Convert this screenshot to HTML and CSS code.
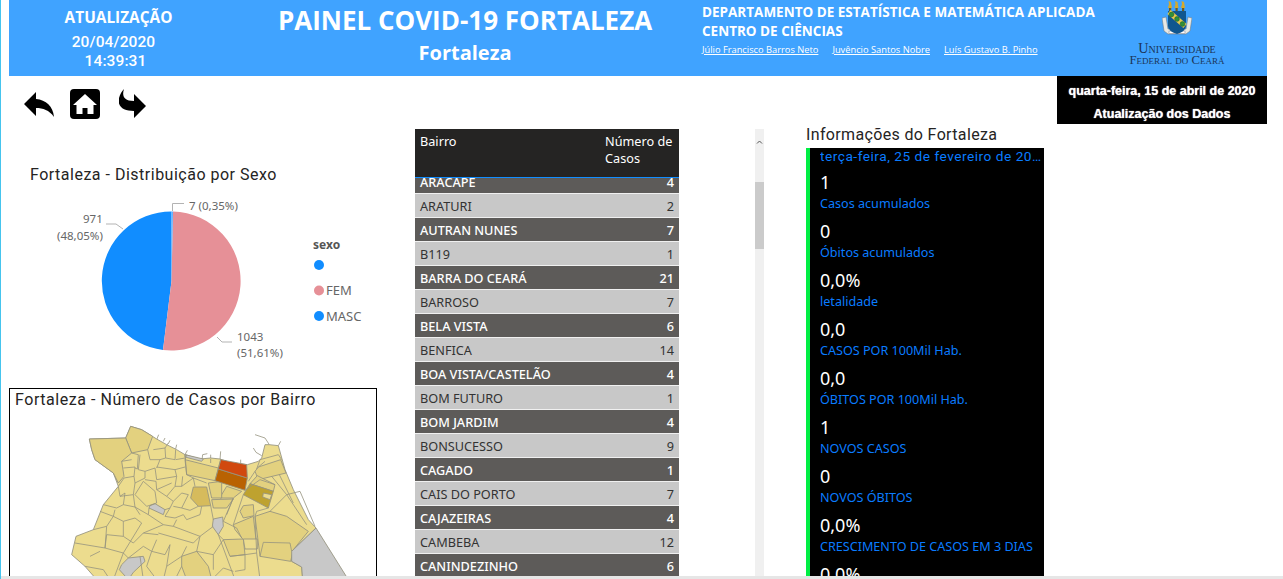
FILE: index.html
```html
<!DOCTYPE html>
<html lang="pt-BR">
<head>
<meta charset="utf-8">
<title>Painel COVID-19 Fortaleza</title>
<link rel="stylesheet" href="styles.css">
</head>
<body>
<div class="page">
  <header class="header">
    <div class="update">
      <div class="update-title">ATUALIZAÇÃO</div>
      <div class="update-date">20/04/2020</div>
      <div class="update-time">14:39:31</div>
    </div>
    <div class="title">
      <h1>PAINEL COVID-19 FORTALEZA</h1>
      <h2>Fortaleza</h2>
    </div>
    <div class="dept">
      <div class="dept-line">DEPARTAMENTO DE ESTATÍSTICA E MATEMÁTICA APLICADA</div>
      <div class="dept-line">CENTRO DE CIÊNCIAS</div>
      <div class="authors">
        <a href="#">Júlio Francisco Barros Neto</a>
        <a href="#">Juvêncio Santos Nobre</a>
        <a href="#">Luís Gustavo B. Pinho</a>
      </div>
    </div>
    <div class="logo">
      <svg class="crest" viewBox="0 0 30 34" width="30" height="34" aria-hidden="true">
        <path d="M0 17 L4 16 L6 28 L24 28 L26 16 L30 17 L28 30 L24 33 L6 33 L2 30 Z" fill="#e8e8e4" stroke="#6f7f8c" stroke-width=".6"/>
        <rect x="7" y="30" width="16" height="2.4" fill="#fff" stroke="#667" stroke-width=".4"/>
        <path d="M6 10 H24 V25 Q24 30 15 33 Q6 30 6 25 Z" fill="#10568f"/>
        <g fill="#d5a92c">
          <path d="M6.5 0 L9 1 L10 7 H6 L7 3 Z"/>
          <path d="M13 0 L15.500 1 L16.500 7 H12.500 L13.500 3 Z"/>
          <path d="M19.500 0 L22 1 L23 7 H19 L20 3 Z"/>
        </g>
        <g fill="#6c5a22">
          <rect x="7" y="7" width="2.200" height="3"/>
          <rect x="13.500" y="7" width="2.200" height="3"/>
          <rect x="20" y="7" width="2.200" height="3"/>
        </g>
        <path d="M7 11 L23 25" stroke="#e4c74c" stroke-width="5"/>
        <g fill="#2f8f3a" stroke="#1d5a26" stroke-width=".5">
          <circle cx="9.500" cy="13.500" r="2.400"/>
          <circle cx="15" cy="18" r="2.400"/>
          <circle cx="20.500" cy="23" r="2.400"/>
        </g>
      </svg>
      <div class="logo-text">Universidade<br>Federal do Ceará</div>
    </div>
  </header>

  <main class="main">
    <section class="left">
      <nav class="nav">
        <svg class="nav-back" viewBox="24 89 31 30" width="31" height="30" aria-hidden="true">
          <path d="M24 104 L36 92 V99 C46 100 53 106 54 117 C49 110 43 108 36 108 V116 Z" fill="#000"/>
        </svg>
        <svg class="nav-home" viewBox="0 0 30 30" width="30" height="30" aria-hidden="true">
          <rect width="30" height="30" rx="4" fill="#000"/>
          <path d="M15 5 L27 16 H23.500 V25 H17.500 V19 H12.500 V25 H6.500 V16 H3 Z" fill="#fff"/>
        </svg>
        <svg class="nav-forward" viewBox="119 89 28 30" width="28" height="30" aria-hidden="true">
          <path d="M134 94 L146 106 L134 118 V111 C124 111 117 107 119 98 C120 94 122 91 124 89 C122 95 123 101 134 101 Z" fill="#000"/>
        </svg>
      </nav>
      <h3 class="pie-title">Fortaleza - Distribuição por Sexo</h3>
      <svg class="pie" viewBox="0 186 368 200" width="368" height="200">
        <g transform="translate(-9 0)">
          <path d="M171.500 281 L163 350 A69.500 69.500 0 0 1 171.500 211.500 Z" fill="#118dff"/>
          <path d="M171.500 281 L173 211.500 A69.500 69.500 0 1 1 163 350 Z" fill="#e69097"/>
          <path d="M171.500 281 L171.500 211.500 L173 211.500 Z" fill="#5aaeff"/>
          <g fill="none" stroke="#b3b3b3" stroke-width="1">
            <path d="M172.500 211 V203.500 H184"/>
            <path d="M123 229 L116 224 H106"/>
            <path d="M217 337 L222 342 H232"/>
          </g>
          <g class="pie-label">
            <text x="189" y="210">7 (0,35%)</text>
            <text x="83" y="223">971</text>
            <text x="57" y="240">(48,05%)</text>
            <text x="237" y="341">1043</text>
            <text x="237" y="357">(51,61%)</text>
          </g>
          <text class="legend-title" x="313" y="249">sexo</text>
          <circle cx="319" cy="265" r="5" fill="#118dff"/>
          <circle cx="319" cy="290.500" r="5" fill="#e69097"/>
          <circle cx="319" cy="316" r="5" fill="#118dff"/>
          <text class="legend-item" x="326" y="295">FEM</text>
          <text class="legend-item" x="326" y="321">MASC</text>
        </g>
      </svg>
      <div class="map-box">
        <h3 class="map-title">Fortaleza - Número de Casos por Bairro</h3>
        <svg class="map" viewBox="30 91 1098 507" width="366" height="169" aria-hidden="true">
          <path class="coast" d="M470 180 L476 165 M490 185 L495 175 M505 192 L510 182 M527 208 L530 195 M555 225 L562 212 M606 240 L608 225 L622 222 M632 238 L632 225 M660 240 L662 215 M722 252 L722 240 M765 165 L795 175 L808 195 M835 198 L842 185 M760 205 L768 218 L785 228"/>
          <path class="cell base" d="M268 178 L377 175 L392 140 L425 150 L470 178 L500 195 L530 210 L555 225 L600 238 L632 235 L660 238 L690 248 L720 252 L742 255 L775 245 L785 235 L795 195 L808 195 L835 198 L855 270 L880 330 L925 420 L948 445 L875 515 L875 545 L905 562 L908 600 L290 600 L255 560 L215 525 L228 470 L280 450 L310 375 L355 320 L340 280 L285 240 L275 210 Z"/>
          <path class="cell mid" d="M377 175 L392 140 L425 150 L458 170 L443 210 L395 220 Z"/>
          <path class="cell mid" d="M268 178 L377 175 L395 220 L365 245 L372 290 L355 310 L340 280 L285 240 L275 210 Z"/>
          <path class="cell mid" d="M555 240 L655 265 L645 303 L560 285 Z"/>
          <path class="cell mid" d="M775 262 L842 240 L858 280 L775 300 L765 275 Z"/>
          <path class="cell mid" d="M750 312 L772 288 L825 315 L820 335 Z"/>
          <path class="cell mid" d="M810 395 L860 410 L925 455 L880 510 L872 545 L780 530 L765 410 Z"/>
          <path class="cell mid" d="M545 530 L590 515 L625 560 L635 600 L560 600 L545 560 Z"/>
          <path class="cell mid" d="M730 378 L760 375 L762 408 L730 415 L720 395 Z"/>
          <path class="cell mid" d="M665 345 L680 320 L725 335 L700 355 L660 355 Z"/>
          <path class="cell mid" d="M625 310 L665 305 L665 355 L635 355 Z"/>
          <path class="cell mid" d="M635 360 L700 358 L680 385 L640 385 Z"/>
          <path class="cell mid" d="M670 480 L730 478 L735 525 L690 530 Z"/>
          <path class="cell mid" d="M700 435 L760 410 L768 480 L730 480 L705 450 Z"/>
          <path class="cell hi" d="M580 322 L620 322 L632 378 L595 380 L572 355 Z"/>
          <path class="cell hot2" d="M655 268 L742 295 L735 332 L645 303 Z"/>
          <path class="cell hot1" d="M662 240 L740 255 L742 295 L655 268 Z"/>
          <path class="cell olive" d="M750 312 L820 335 L805 385 L730 345 Z"/>
          <path class="cell light" d="M790 340 L815 345 L810 360 L788 352 Z"/>
          <path class="cell light" d="M730 478 L772 478 L772 508 L735 508 Z"/>
          <path class="cell gray" d="M948 445 L1045 600 L908 600 L905 562 L875 545 L875 515 Z"/>
          <path class="cell gray" d="M450 378 L465 372 L495 390 L490 405 L447 385 Z"/>
          <path class="cell gray" d="M640 418 L668 412 L670 440 L655 465 L637 440 Z"/>
          <path class="cell gray" d="M365 555 L385 535 L430 530 L435 545 L400 578 L385 600 L358 570 Z"/>
          <path class="cell gray" d="M555 225 L610 238 L605 245 L555 232 Z"/>
          <path class="lines" d="M395 220 L415 225 L412 268 L405 265 M365 245 L395 240 M370 265 L405 262 L402 290 L372 295
            M420 225 L415 270 L435 275 L465 265 L470 300 M443 210 L450 240 L480 240 L470 265 M460 210 L495 205 L497 235 L480 240 M495 205 L505 190 M497 235 L525 240 L527 210
            M527 240 L555 235 M555 225 L560 285 M470 262 L525 270 L530 290 L470 300 M525 270 L555 262
            M372 295 L355 320 L360 350 L400 345 L405 310 L435 295 L435 275 M405 310 L402 290 M435 300 L468 305 L470 330 L500 350 L525 320 L545 320 L548 290 M470 330 L515 310 M530 290 L525 320
            M545 320 L580 295 L585 320 M560 285 L580 295 L620 310
            M405 345 L430 305 L465 335 L470 370 L440 380 L405 345 M360 350 L375 340 L370 375 L405 382 M400 345 L405 382 L445 405 L447 385 M405 382 L420 405
            M500 350 L520 365 L510 385 L495 390 M520 365 L545 340 L565 345 L545 385 L520 380 M545 385 L570 392 L595 380
            M510 385 L495 410 L525 415 L550 405 L560 420 L600 405 L605 380
            M310 375 L350 385 L370 375 M300 395 L340 410 L345 390 M320 440 L340 410 L370 425 L370 470 L320 465 M370 425 L405 415 L425 430 M280 450 L320 440 L315 505 L225 490
            M315 505 L370 520 L385 535 M320 465 L315 505 M425 430 L370 520 M370 470 L400 490 L430 460 L475 465 M430 460 L490 435 L520 440 L530 420 M445 405 L490 435
            M475 460 L580 490 L600 470 L640 440 M520 440 L600 470 M470 480 L455 515 L495 525 L510 495 M455 515 L440 560 L470 600 M510 495 L500 560 L545 530 M500 560 L490 600 M430 500 L455 515 M430 500 L385 535
            M590 515 L600 470 M590 515 L640 525 L670 480 L655 465 L705 600 M640 525 L640 570 M670 425 L710 445 L725 475 M680 405 L700 355 L670 425 M632 378 L640 420 M730 345 L700 435
            M765 410 L770 520 L780 600 M690 530 L735 525 L735 570 L705 575 M735 525 L770 520 M780 530 L790 488 L870 490 L875 515 M805 385 L770 395 L765 410
            M810 395 L860 345 L920 435 M860 345 L900 335 L945 440 M838 285 L880 370 M815 290 L860 345 M780 300 L825 315 M735 332 L780 300 M655 265 L662 240 M555 240 L560 225 M632 238 L632 250
            M770 268 L780 240 L835 225 L845 240 M765 275 L745 305 M795 245 L775 262 M635 600 L670 565 L700 575 M560 500 L545 530 M545 560 L525 600
            M270 530 L300 515 M340 600 L370 520 M255 560 L310 570 M310 570 L330 600 M420 530 L430 600"/>
        </svg>
      </div>
    </section>

    <section class="cases">
      <div class="cases-head">
        <div>Bairro</div>
        <div class="cases-head-num">Número de Casos</div>
      </div>
      <div class="cases-body">
        <div class="row dark"><span>ARACAPE</span><span>4</span></div>
        <div class="row"><span>ARATURI</span><span>2</span></div>
        <div class="row dark"><span>AUTRAN NUNES</span><span>7</span></div>
        <div class="row"><span>B119</span><span>1</span></div>
        <div class="row dark"><span>BARRA DO CEARÁ</span><span>21</span></div>
        <div class="row"><span>BARROSO</span><span>7</span></div>
        <div class="row dark"><span>BELA VISTA</span><span>6</span></div>
        <div class="row"><span>BENFICA</span><span>14</span></div>
        <div class="row dark"><span>BOA VISTA/CASTELÃO</span><span>4</span></div>
        <div class="row"><span>BOM FUTURO</span><span>1</span></div>
        <div class="row dark"><span>BOM JARDIM</span><span>4</span></div>
        <div class="row"><span>BONSUCESSO</span><span>9</span></div>
        <div class="row dark"><span>CAGADO</span><span>1</span></div>
        <div class="row"><span>CAIS DO PORTO</span><span>7</span></div>
        <div class="row dark"><span>CAJAZEIRAS</span><span>4</span></div>
        <div class="row"><span>CAMBEBA</span><span>12</span></div>
        <div class="row dark"><span>CANINDEZINHO</span><span>6</span></div>
      </div>
    </section>

    <div class="scrollbar">
      <svg class="scroll-arrow" viewBox="0 0 9 6" width="9" height="6" aria-hidden="true"><path d="M2 4.500 L4.500 2 L7 4.500" fill="none" stroke="#555" stroke-width="1"/></svg>
      <div class="scroll-thumb"></div>
    </div>

    <section class="info">
      <h3 class="info-title">Informações do Fortaleza</h3>
      <div class="info-card">
        <div class="info-date">terça-feira, 25 de fevereiro de 2020</div>
        <div class="stat"><div class="stat-value">1</div><div class="stat-label">Casos acumulados</div></div>
        <div class="stat"><div class="stat-value">0</div><div class="stat-label">Óbitos acumulados</div></div>
        <div class="stat"><div class="stat-value">0,0%</div><div class="stat-label">letalidade</div></div>
        <div class="stat"><div class="stat-value">0,0</div><div class="stat-label">CASOS POR 100Mil Hab.</div></div>
        <div class="stat"><div class="stat-value">0,0</div><div class="stat-label">ÓBITOS POR 100Mil Hab.</div></div>
        <div class="stat"><div class="stat-value">1</div><div class="stat-label">NOVOS CASOS</div></div>
        <div class="stat"><div class="stat-value">0</div><div class="stat-label">NOVOS ÓBITOS</div></div>
        <div class="stat"><div class="stat-value">0,0%</div><div class="stat-label">CRESCIMENTO DE CASOS EM 3 DIAS</div></div>
        <div class="stat"><div class="stat-value">0,0%</div></div>
      </div>
    </section>

    <aside class="refresh">
      <div>quarta-feira, 15 de abril de 2020</div>
      <div>Atualização dos Dados</div>
    </aside>
  </main>
  <div class="bottom-bar"></div>
</div>
</body>
</html>
```

FILE: styles.css
```css
* { box-sizing: border-box; }
html, body { margin: 0; padding: 0; height: 100%; overflow: hidden; background: #fff; }
h1, h2, h3 { margin: 0; font-weight: normal; }

.page {
  width: 1283px;
  height: 579px;
  display: flex;
  flex-direction: column;
  border-left: 1px solid #45c4ee;
  overflow: hidden;
  font-family: "Noto Sans", sans-serif;
  color: #252423;
}

/* Header */
.header {
  flex: none;
  width: 1258px;
  height: 76px;
  margin-left: 8px;
  display: flex;
  background: #40a3ff;
  color: #fff;
}
.update { width: 219px; text-align: center; padding-top: 9px; }
.update-title { font: bold 15.4px/18px "Open Sans", sans-serif; }
.update-date { font: 500 15.5px/19px Roboto, sans-serif; padding-right: 10px; margin-top: 6px; letter-spacing: .1px; }
.update-time { font: 500 15.5px/19px Roboto, sans-serif; padding-right: 6px; letter-spacing: .1px; }
.title { width: 474px; text-align: center; padding-top: 3px; }
.title h1 { font: bold 26px/34px "Open Sans", sans-serif; }
.title h2 { font: bold 20px/26px "Open Sans", sans-serif; margin-top: 3px; }
.dept { width: 418px; padding-top: 3px; }
.dept-line { font: bold 13.5px/18.5px "Open Sans", sans-serif; }
.authors { display: flex; gap: 14px; margin-top: 2px; font: 9.3px/16px "Open Sans", sans-serif; }
.authors a { color: #fff; text-decoration: underline; }
.logo { width: 105px; display: flex; flex-direction: column; align-items: center; padding: 1px 0 0 9px; }
.crest { flex: none; margin-bottom: 7px; }
.logo-text {
  font: 12.7px/12px "Liberation Serif", serif;
  font-variant: small-caps;
  color: #1b3558;
  white-space: nowrap;
  text-align: center;
}
.logo-text::first-line { font-size: 14.2px; }

/* Main */
.main { flex: 1; min-height: 0; display: flex; align-items: flex-start; overflow: hidden; }

.left { flex: none; width: 368px; margin-left: 8px; }
.nav { display: flex; align-items: center; height: 30px; margin-top: 13px; padding-left: 15px; }
.nav-home { margin-left: 15px; }
.nav-forward { margin-left: 19px; }
.pie-title { font: 16px/20px Roboto, sans-serif; letter-spacing: .5px; margin: 46px 0 0 21px; height: 20px; color: #252423; }
.pie { display: block; margin-top: 1px; }
.pie-label text { font: 11.5px "Noto Sans", sans-serif; fill: #666; }
.legend-title { font: bold 12px "Noto Sans", sans-serif; fill: #555; }
.legend-item { font: 13px "Noto Sans", sans-serif; fill: #666; }
.map-box { border: 1px solid #000; height: 260px; margin-top: 2px; padding-top: 1px; }
.map-title { font: 16px/20px Roboto, sans-serif; letter-spacing: .55px; padding-left: 5px; }
.map { display: block; }
.cell { stroke: #96937f; stroke-width: 2.6; stroke-linejoin: round; }
.base, .light { fill: #ecdc8e; }
.mid { fill: #e3d17f; }
.hi { fill: #d6bb5c; }
.hot1 { fill: #d1490f; }
.hot2 { fill: #b96202; }
.olive { fill: #bea22f; }
.gray { fill: #c8c8c8; }
.lines, .coast { fill: none; stroke: #96937f; stroke-width: 2.4; stroke-linejoin: round; }

/* Table */
.cases { flex: none; width: 264px; height: 450px; margin: 53px 0 0 38px; display: flex; flex-direction: column; overflow: hidden; font-size: 12.7px; }
.cases-head {
  flex: none;
  height: 49px;
  display: flex;
  justify-content: space-between;
  padding: 4px 5px 0;
  background: #252423;
  border-bottom: 1px solid #118dff;
  color: #fff;
  line-height: 17px;
}
.cases-head-num { width: 69px; }
.cases-body { flex: 1; overflow: hidden; }
.row {
  height: 24px;
  display: flex;
  justify-content: space-between;
  align-items: center;
  padding: 1px 5px 0;
  background: #c8c8c8;
  border-bottom: 1px solid #f0f0f0;
  color: #333;
}
.row:first-child { margin-top: -8px; }
.row.dark { background: #5d5b59; color: #fff; font-weight: 500; }

/* Scrollbar */
.scrollbar { flex: none; width: 9px; height: 450px; margin: 53px 0 0 76px; background: #f0f0f0; padding-top: 10px; }
.scroll-arrow { display: block; }
.scroll-thumb { height: 67px; margin-top: 37px; background: #cbcbcb; }

/* Info card */
.info { flex: none; width: 238px; margin: 49px 0 0 42px; }
.info-title { font: 16px/20px Roboto, sans-serif; letter-spacing: .35px; height: 23px; }
.info-card { height: 440px; background: #000; border-left: 4px solid #00ee44; padding: 0 0 0 10px; overflow: hidden; }
.info-date { font: 400 13.7px/17px Roboto, sans-serif; letter-spacing: .5px; color: #0a7cff; white-space: nowrap; overflow: hidden; text-overflow: ellipsis; }
.stat { height: 49px; padding-top: 6px; }
.stat-value { font: 18px/22px "Noto Sans", sans-serif; color: #fff; }
.stat-label { font: 12.6px/18px "Noto Sans", sans-serif; color: #0a7cff; white-space: nowrap; margin-top: 2px; }

/* Refresh badge */
.refresh {
  flex: none;
  width: 210px;
  height: 48px;
  margin-left: 13px;
  background: #000;
  color: #fff;
  font: bold 12.5px/23px "Liberation Sans", sans-serif;
  text-align: center;
  padding-top: 4px;
  text-shadow: 0 0 1px #fff;
}

.bottom-bar { flex: none; height: 3px; background: #e6e6e6; }
```
